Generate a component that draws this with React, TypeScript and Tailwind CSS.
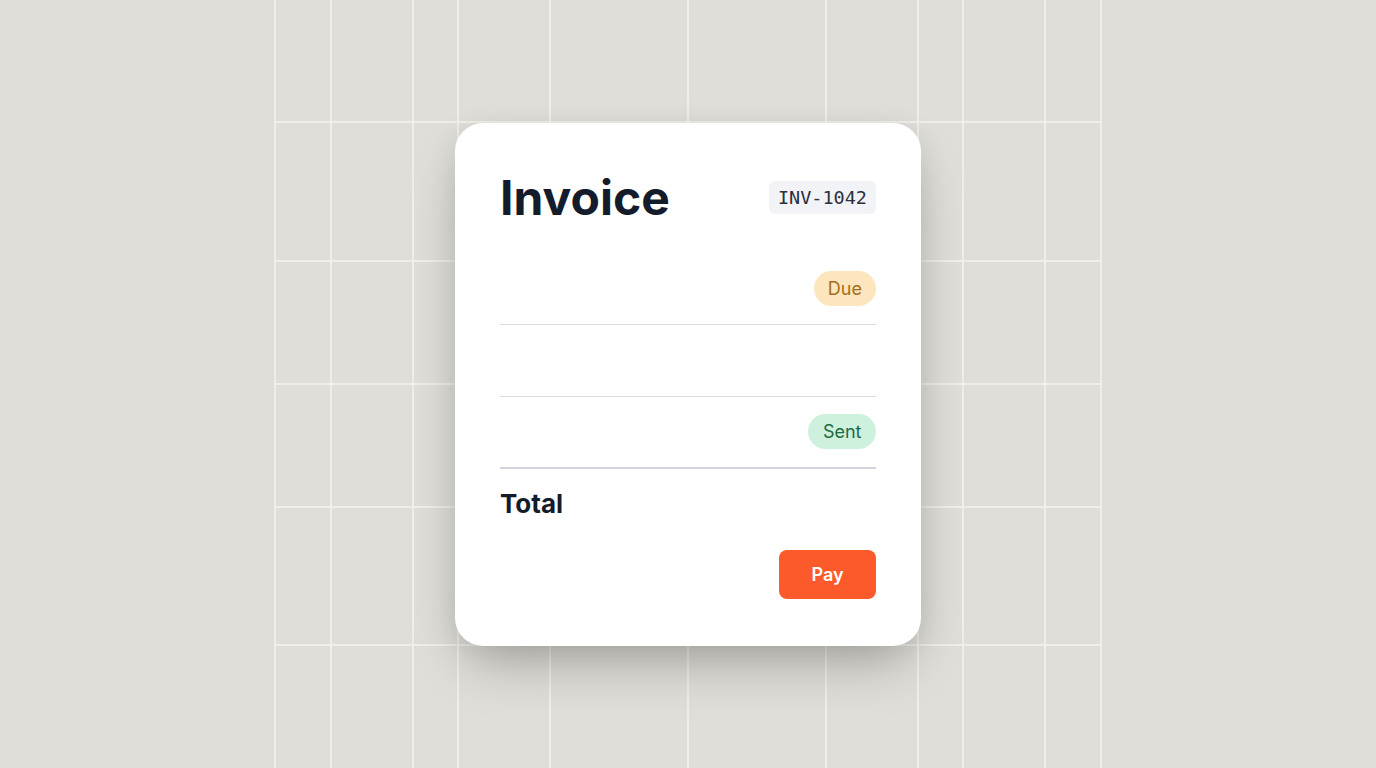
import React from "react";

// backdrop grid: mirrored around the page centre
const columns = [275, 331, 413, 458, 550, 688, 826, 918, 963, 1045, 1101];
const rows = [122, 261, 384, 507, 645];

const GridBackdrop = () => (
  <svg
    className="absolute inset-0 pointer-events-none"
    width="1376"
    height="768"
    viewBox="0 0 1376 768"
  >
    {columns.map((x) => (
      <line key={`c${x}`} x1={x} y1={0} x2={x} y2={768} stroke="#f4f3ef" strokeWidth={1.5} />
    ))}
    {rows.map((y) => (
      <line key={`r${y}`} x1={275} y1={y} x2={1101} y2={y} stroke="#f4f3ef" strokeWidth={1.5} />
    ))}
  </svg>
);

const StatusPill = ({ label, tone }: { label: string; tone: "due" | "sent" }) => (
  <span
    className={
      tone === "due"
        ? "h-[35px] px-3.5 flex items-center rounded-full bg-[#fde6bd] text-[#a56d18] text-[18px]"
        : "h-[35px] px-[14.5px] flex items-center rounded-full bg-[#cdf1dc] text-[#1c6a44] text-[18px]"
    }
  >
    {label}
  </span>
);

const App = () => {
  return (
    <div
      className="relative w-full h-screen overflow-hidden bg-[#e0ded8] flex items-center justify-center"
      style={{ fontFamily: "Inter, 'Noto Sans', sans-serif" }}
    >
      <GridBackdrop />
      <div className="relative w-[466px] rounded-[28px] bg-white px-[45px] pt-[51px] pb-[47px] flex flex-col shadow-[0_26px_56px_-12px_rgba(0,0,0,0.26),0_6px_28px_rgba(0,0,0,0.08)]">
        <div className="flex items-center justify-between h-12">
          <h1 className="text-[48px] leading-none font-bold text-[#141b2b]">Invoice</h1>
          <span
            className="h-[33px] px-[9px] flex items-center rounded-md bg-[#f2f3f6] text-[18.5px] text-[#2a303d]"
            style={{ fontFamily: "'DejaVu Sans Mono', 'Liberation Mono', monospace" }}
          >
            INV-1042
          </span>
        </div>

        <div className="mt-[31px] flex flex-col">
          <div className="h-[72px] flex items-center justify-end border-b border-[#d9dae0]">
            <StatusPill label="Due" tone="due" />
          </div>
          <div className="h-[72px] border-b border-[#d9dae0]" />
          <div className="h-[72px] flex items-center justify-end border-b-2 border-[#d2d4db]">
            <StatusPill label="Sent" tone="sent" />
          </div>
        </div>

        <div className="mt-[19px] h-8 flex items-center text-[26px] font-bold text-[#141b2b]">
          Total
        </div>

        <div className="mt-[30px] flex justify-end">
          <button className="w-[97px] h-[49px] rounded-lg bg-[#fd5a2b] text-white text-[18px] font-semibold">
            Pay
          </button>
        </div>
      </div>
    </div>
  );
};

export default App;
